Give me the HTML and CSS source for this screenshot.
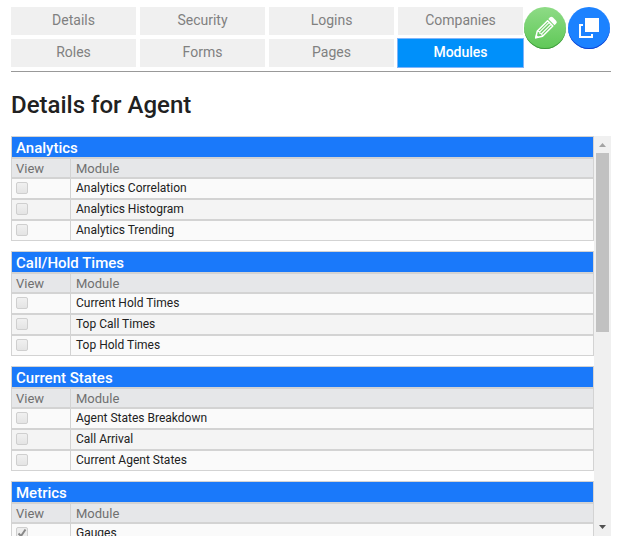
FILE: index.html
```html
<!DOCTYPE html>
<html lang="en">
<head>
  <meta charset="UTF-8">
  <meta name="viewport" content="width=device-width, initial-scale=1.0">
  <title>Details for Agent</title>
  <link rel="stylesheet" href="styles.css">
</head>
<body>
  <header class="toolbar">
    <nav class="tabs">
      <a class="tab" href="#details">Details</a>
      <a class="tab" href="#security">Security</a>
      <a class="tab" href="#logins">Logins</a>
      <a class="tab" href="#companies">Companies</a>
      <a class="tab" href="#roles">Roles</a>
      <a class="tab" href="#forms">Forms</a>
      <a class="tab" href="#pages">Pages</a>
      <a class="tab active" href="#modules">Modules</a>
    </nav>
    <div class="actions">
      <button class="round edit" type="button" aria-label="Edit">
        <svg width="42" height="42" viewBox="0 0 42 42">
          <g transform="translate(11 31.500) rotate(-45)">
            <path d="M1 0L7-3.700H21.500V3.700H7z" fill="none" stroke="#fff" stroke-width="1.500" stroke-linejoin="round"/>
            <path d="M7-3.700L8-1.300 7 0l1 1.300-1 2.400M8-1.300H21M8 1.300H21" fill="none" stroke="#fff" stroke-width="1.100"/>
            <path d="M0 0l3.500-2v4z" fill="#fff"/>
            <path d="M23.300-4.400h2.200q2 0 2 2v4.800q0 2-2 2h-2.200z" fill="#fff"/>
          </g>
        </svg>
      </button>
      <button class="round copy" type="button" aria-label="Copy">
        <svg width="42" height="42" viewBox="0 0 42 42">
          <path d="M17 11h14v14H17z" fill="#fff"/>
          <path d="M15 18h-3v12h12v-3" fill="none" stroke="#fff" stroke-width="2"/>
        </svg>
      </button>
    </div>
  </header>

  <h1>Details for Agent</h1>

  <main class="panel">
    <div class="module-list" id="module-list">
      <table class="modules">
        <thead>
          <tr class="group"><th colspan="2">Analytics</th></tr>
          <tr class="heads"><th class="view">View</th><th>Module</th></tr>
        </thead>
        <tbody>
          <tr><td><input type="checkbox" id="correlation" disabled></td><td><label for="correlation">Analytics Correlation</label></td></tr>
          <tr><td><input type="checkbox" id="histogram" disabled></td><td><label for="histogram">Analytics Histogram</label></td></tr>
          <tr><td><input type="checkbox" id="trending" disabled></td><td><label for="trending">Analytics Trending</label></td></tr>
        </tbody>
      </table>

      <table class="modules">
        <thead>
          <tr class="group"><th colspan="2">Call/Hold Times</th></tr>
          <tr class="heads"><th class="view">View</th><th>Module</th></tr>
        </thead>
        <tbody>
          <tr><td><input type="checkbox" id="current-hold" disabled></td><td><label for="current-hold">Current Hold Times</label></td></tr>
          <tr><td><input type="checkbox" id="top-call" disabled></td><td><label for="top-call">Top Call Times</label></td></tr>
          <tr><td><input type="checkbox" id="top-hold" disabled></td><td><label for="top-hold">Top Hold Times</label></td></tr>
        </tbody>
      </table>

      <table class="modules">
        <thead>
          <tr class="group"><th colspan="2">Current States</th></tr>
          <tr class="heads"><th class="view">View</th><th>Module</th></tr>
        </thead>
        <tbody>
          <tr><td><input type="checkbox" id="breakdown" disabled></td><td><label for="breakdown">Agent States Breakdown</label></td></tr>
          <tr><td><input type="checkbox" id="arrival" disabled></td><td><label for="arrival">Call Arrival</label></td></tr>
          <tr><td><input type="checkbox" id="agent-states" disabled></td><td><label for="agent-states">Current Agent States</label></td></tr>
        </tbody>
      </table>

      <table class="modules">
        <thead>
          <tr class="group"><th colspan="2">Metrics</th></tr>
          <tr class="heads"><th class="view">View</th><th>Module</th></tr>
        </thead>
        <tbody>
          <tr><td><input type="checkbox" id="gauges" checked disabled></td><td><label for="gauges">Gauges</label></td></tr>
        </tbody>
      </table>
    </div>

    <div class="scrollbar">
      <button class="arrow" type="button" id="scroll-up" aria-label="Scroll up">
        <svg width="17" height="17" viewBox="0 0 17 17"><path d="M5 11l3.500-4 3.500 4z" fill="#a3a3a3"/></svg>
      </button>
      <div class="track"><div class="thumb"></div></div>
      <button class="arrow" type="button" id="scroll-down" aria-label="Scroll down">
        <svg width="17" height="17" viewBox="0 0 17 17"><path d="M5 6l3.500 4L12 6z" fill="#505050"/></svg>
      </button>
    </div>
  </main>

  <script>
    const list = document.getElementById("module-list");

    document.getElementById("scroll-up").addEventListener("click", () => {
      list.scrollTop -= 40;
    });

    document.getElementById("scroll-down").addEventListener("click", () => {
      list.scrollTop += 40;
    });
  </script>
</body>
</html>
```
FILE: styles.css
```css
* {
  box-sizing: border-box;
}

body {
  font-family: Roboto, 'Liberation Sans', sans-serif;
  margin: 0;
  padding: 7px 15px 12px 11px;
  background-color: #fff;
  color: #212121;
  height: 100vh;
  display: flex;
  flex-direction: column;
}

.toolbar {
  display: flex;
  align-items: flex-start;
  padding-bottom: 4px;
  border-bottom: 1px solid #999;
}

.tabs {
  flex: 1;
  display: grid;
  grid-template-columns: repeat(4, 1fr);
  gap: 4px;
}

.tab {
  height: 28px;
  line-height: 27px;
  font-size: 14px;
  text-align: center;
  text-decoration: none;
  color: #808080;
  background-color: #f0f0f0;
}

.tab.active {
  color: #fff;
  font-weight: 500;
  background-color: #0090fa;
  outline: 1px solid #7fb4fa;
}

.actions {
  display: flex;
  gap: 2px;
  padding: 0 1px;
}

.round {
  width: 42px;
  height: 42px;
  padding: 0;
  border: none;
  border-radius: 50%;
  cursor: pointer;
}

.round svg {
  display: block;
}

.edit {
  background: linear-gradient(#8edb86, #5fc857);
  box-shadow: inset 0 -1px 0 #3f9a3c;
}

.copy {
  background-color: #1c82ff;
  box-shadow: inset 0 -1px 0 #1240d0;
}

h1 {
  margin: 17px 0 15px;
  font-size: 24px;
  font-weight: 500;
  line-height: 32px;
}

.panel {
  flex: 1;
  min-height: 0;
  display: flex;
}

.module-list {
  flex: 1;
  overflow-y: auto;
  scrollbar-width: none;
}

.modules {
  width: 100%;
  margin-bottom: 10px;
  border-collapse: separate;
  border-spacing: 0;
}

.modules th,
.modules td {
  height: 21px;
  padding: 0 5px;
  border: 1px solid #d3d3d3;
  border-left: none;
  text-align: left;
  font-size: 12px;
  line-height: 19px;
  background-color: #fafafa;
}

.modules tr > :first-child {
  padding-left: 4px;
  border-left: 1px solid #d3d3d3;
}

.modules tbody tr:nth-child(even) td {
  background-color: #f4f4f4;
}

.modules .group th {
  height: 22px;
  padding-top: 2px;
  font-size: 15px;
  font-weight: 500;
  line-height: 18px;
  color: #fff;
  background-color: #1a79fa;
}

.modules .heads th {
  height: 20px;
  padding-top: 2px;
  font-size: 13px;
  font-weight: 400;
  line-height: 16px;
  color: #707070;
  background-color: #e6e7e9;
}

.modules .view {
  width: 60px;
}

.modules label {
  display: block;
  height: 19px;
  line-height: 18px;
}

.modules input {
  appearance: none;
  display: block;
  width: 12px;
  height: 12px;
  margin: 0 0 2px;
  border: 1px solid #cfcfcf;
  border-radius: 2px;
  background: linear-gradient(#f0f0f0, #e4e4e4);
}

.modules input:checked {
  background: url("data:image/svg+xml,%3Csvg xmlns='http://www.w3.org/2000/svg' viewBox='0 0 10 10'%3E%3Cpath d='M1.500 5.500L4 8l4.500-6.500' fill='none' stroke='%23888' stroke-width='2'/%3E%3C/svg%3E") center / 10px no-repeat #ececec;
}

.scrollbar {
  width: 17px;
  display: flex;
  flex-direction: column;
  background-color: #f0f0f0;
}

.arrow {
  height: 17px;
  padding: 0;
  border: none;
  background: none;
}

.arrow svg {
  display: block;
}

.track {
  flex: 1;
  padding: 0 2px;
}

.thumb {
  height: 49%;
  background-color: #c1c1c1;
}
```
